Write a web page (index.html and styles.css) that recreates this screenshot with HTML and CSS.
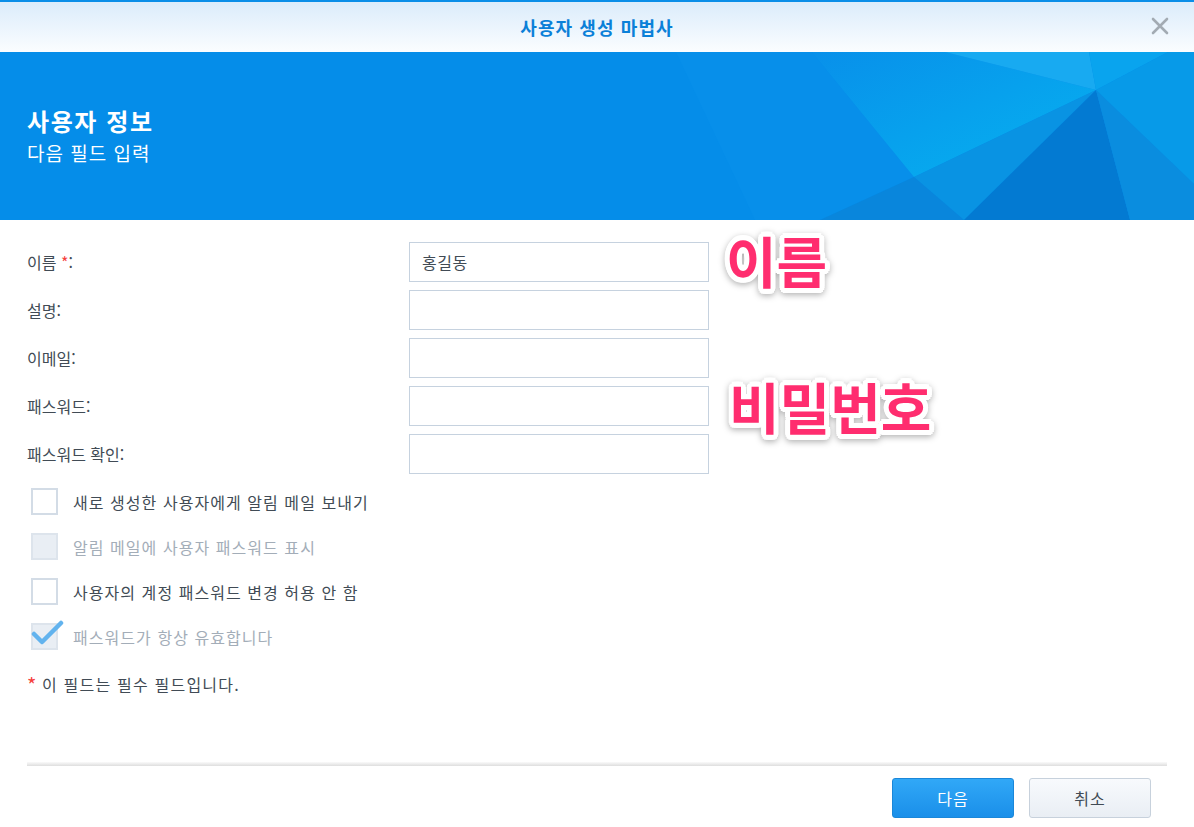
FILE: index.html
```html
<!DOCTYPE html>
<html lang="ko">
<head>
<meta charset="UTF-8">
<title>사용자 생성 마법사</title>
<link rel="stylesheet" href="styles.css">
</head>
<body>
<div class="dialog">
  <header class="titlebar">
    <h1>사용자 생성 마법사</h1>
    <span class="close">
      <svg width="18" height="18" viewBox="0 0 18 18"><path d="M2 2L16 16M16 2L2 16" stroke="#a3abb3" stroke-width="2.6" stroke-linecap="round"/></svg>
    </span>
  </header>

  <section class="banner">
    <svg class="facets" width="1194" height="168" viewBox="0 0 1194 168" preserveAspectRatio="none">
      <defs>
        <linearGradient id="glow" x1="0" y1="0" x2="1" y2="1">
          <stop offset="0" stop-color="#0890ea"/>
          <stop offset="1" stop-color="#06b2f0"/>
        </linearGradient>
      </defs>
      <polygon points="676,0 812,0 914,125 820,168 755,168" fill="#078fea"/>
      <polygon points="812,0 945,0 1096,38 914,125" fill="url(#glow)"/>
      <polygon points="945,0 1089,0 1096,38" fill="#18aaf1"/>
      <polygon points="1089,0 1168,0 1096,38" fill="#09a4ee"/>
      <polygon points="1168,0 1194,0 1194,132 1096,38" fill="#079ae8"/>
      <polygon points="914,125 1096,38 964,168" fill="#0993e3"/>
      <polygon points="914,125 964,168 820,168" fill="#0986dc"/>
      <polygon points="1096,38 964,168 1130,168" fill="#037ad2"/>
      <polygon points="1096,38 1194,132 1194,168 1130,168" fill="#0a8ddf"/>
    </svg>
    <div class="banner-text">
      <h2>사용자 정보</h2>
      <p>다음 필드 입력</p>
    </div>
  </section>

  <main class="form">
    <div class="fields">
      <div class="field">
        <label>이름 <span class="req">*</span>:</label>
        <input type="text" value="홍길동">
      </div>
      <div class="field">
        <label>설명:</label>
        <input type="text">
      </div>
      <div class="field">
        <label>이메일:</label>
        <input type="text">
      </div>
      <div class="field">
        <label>패스워드:</label>
        <input type="password">
      </div>
      <div class="field">
        <label>패스워드 확인:</label>
        <input type="password">
      </div>
    </div>

    <div class="checks">
      <div class="check"><span class="box"></span>새로 생성한 사용자에게 알림 메일 보내기</div>
      <div class="check disabled"><span class="box"></span>알림 메일에 사용자 패스워드 표시</div>
      <div class="check"><span class="box"></span>사용자의 계정 패스워드 변경 허용 안 함</div>
      <div class="check disabled"><span class="box">
        <svg class="tick" width="34" height="30" viewBox="0 0 34 30"><path d="M4 17L12 25L31 6" fill="none" stroke="#62b3ee" stroke-width="4.5" stroke-linecap="round" stroke-linejoin="round"/></svg>
      </span>패스워드가 항상 유효합니다</div>
    </div>

    <p class="note"><span class="req star">*</span> 이 필드는 필수 필드입니다.</p>

    <div class="callout callout-name">이름</div>
    <div class="callout callout-pass">비밀번호</div>
  </main>

  <footer class="footer">
    <div class="rule"></div>
    <div class="actions">
      <button class="btn btn-primary">다음</button>
      <button class="btn">취소</button>
    </div>
  </footer>
</div>
</body>
</html>
```

FILE: styles.css
```css
*, *:before, *:after{
  box-sizing: border-box;
}
body{
  margin: 0;
  background: #fff;
  color: #414b55;
  font-family: "Noto Sans CJK KR", "Noto Sans", sans-serif;
  font-size: 16px;
}
.dialog{
  height: 100vh;
  display: flex;
  flex-direction: column;
}

/* title bar */
.titlebar{
  height: 52px;
  border-top: 2px solid #0a8ee8;
  background: linear-gradient(#dbecfb, #fbfdff);
  display: flex;
  align-items: center;
  justify-content: center;
  position: relative;
}
.titlebar h1{
  margin: 0;
  font-size: 18px;
  font-weight: bold;
  letter-spacing: 1.1px;
  color: #0b80d8;
}
.close{
  position: absolute;
  right: 25px;
  top: 15px;
  display: flex;
}

/* banner */
.banner{
  height: 168px;
  background: #058de9;
  position: relative;
  overflow: hidden;
  display: flex;
  align-items: center;
  padding-left: 27px;
}
.facets{
  position: absolute;
  left: 0;
  top: 0;
}
.banner-text{
  position: relative;
  color: #fff;
}
.banner-text h2{
  margin: 0 0 4px;
  font-size: 24px;
  font-weight: bold;
  letter-spacing: 1.6px;
  line-height: 30px;
}
.banner-text p{
  margin: 0;
  font-size: 19px;
  letter-spacing: 1px;
  line-height: 26px;
}

/* form */
.form{
  flex: 1;
  position: relative;
  padding: 22px 27px 0;
}
.fields{
  display: flex;
  flex-direction: column;
  gap: 8px;
}
.field{
  display: flex;
  align-items: center;
}
.field label{
  width: 382px;
}
.field input{
  width: 300px;
  height: 40px;
  border: 1px solid #c6d2df;
  padding: 0 12px;
  font: inherit;
  letter-spacing: 0.5px;
  color: #414b55;
  outline: none;
}
.req{
  color: #f5403c;
}

.checks{
  margin-top: 14px;
  display: flex;
  flex-direction: column;
  gap: 18px;
}
.check{
  display: flex;
  align-items: center;
  height: 27px;
  letter-spacing: 1.05px;
}
.box{
  width: 27px;
  height: 27px;
  margin: 0 15px 0 4px;
  border: 2px solid #d3dce6;
  background: #fff;
  position: relative;
}
.check.disabled{
  color: #a3adb8;
}
.check.disabled .box{
  background: #e9eef4;
  border-color: #dde4ec;
}
.tick{
  position: absolute;
  left: -3px;
  top: -8px;
}

.note{
  margin: 24px 0 0;
  line-height: 20px;
  letter-spacing: 1.2px;
}
.star{
  font-size: 20px;
  vertical-align: -2px;
  letter-spacing: 0;
}

/* annotations */
.callout{
  position: absolute;
  font-size: 55px;
  font-weight: bold;
  line-height: 1;
  color: #ff2d6f;
  text-shadow:
    5px 0 0 #fff, 4.6px 1.9px 0 #fff, 3.5px 3.5px 0 #fff, 1.9px 4.6px 0 #fff,
    0 5px 0 #fff, -1.9px 4.6px 0 #fff, -3.5px 3.5px 0 #fff, -4.6px 1.9px 0 #fff,
    -5px 0 0 #fff, -4.6px -1.9px 0 #fff, -3.5px -3.5px 0 #fff, -1.9px -4.6px 0 #fff,
    0 -5px 0 #fff, 1.9px -4.6px 0 #fff, 3.5px -3.5px 0 #fff, 4.6px -1.9px 0 #fff,
    3px 0 0 #fff, -3px 0 0 #fff, 0 3px 0 #fff, 0 -3px 0 #fff;
  filter: drop-shadow(0 2px 3px rgba(0, 0, 0, 0.3));
}
.callout-name{
  left: 726px;
  top: 12px;
}
.callout-pass{
  left: 729px;
  top: 158px;
}

/* footer */
.rule{
  height: 4px;
  margin: 0 27px;
  background: linear-gradient(#fafafa, #dedede);
}
.actions{
  display: flex;
  justify-content: flex-end;
  gap: 15px;
  padding: 12px 43px 9px;
}
.btn{
  width: 122px;
  height: 40px;
  border: 1px solid #c7d1dc;
  border-radius: 3px;
  background: linear-gradient(#f8fafd, #e9eef4);
  color: #414b55;
  font: inherit;
  font-size: 16px;
  letter-spacing: 1px;
}
.btn-primary{
  border-color: #1a87d9;
  background: linear-gradient(#31a8f7, #1a8fe9);
  color: #fff;
}
```
